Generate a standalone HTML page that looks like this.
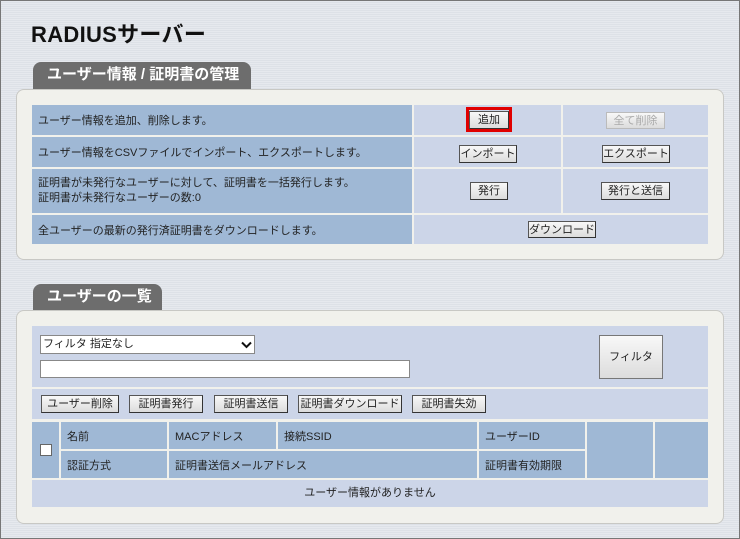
<!DOCTYPE html>
<html><head><meta charset="utf-8"><style>
*{margin:0;padding:0;box-sizing:border-box}
body{width:740px;height:539px;overflow:hidden;font-family:"Liberation Sans","Noto Sans CJK JP",sans-serif;font-size:11px;color:#222}
#w{position:absolute;left:0;top:0;width:740px;height:539px;border:1px solid #777;background:repeating-linear-gradient(#e6e9ee 0 1px,#dde1e7 1px 2px)}
.a{position:absolute}
h1{position:absolute;left:30px;top:16px;font-size:22px;font-weight:bold;color:#111;letter-spacing:0.3px}
.tab{position:absolute;background:#6d6d6d;border-radius:8px 8px 0 0;color:#fff;font-weight:bold;font-size:15px;padding-left:14px;line-height:26px}
.pan{position:absolute;left:15px;width:708px;background:#f1f1ec;border:1px solid #c8c8c4;border-radius:8px}
.dk{position:absolute;background:#9fb8d5;padding-left:6px;display:flex;align-items:center}
.lt{position:absolute;background:#ccd5e8}
.btn{position:absolute;background:linear-gradient(#f8f8f8,#dcdcdc);border:1px solid #555;border-right-color:#333;border-bottom-color:#333;font-size:11px;text-align:center;line-height:16px}
.wh{position:absolute;background:#fff;border:1px solid #888}
</style></head><body><div id="w">
<h1>RADIUSサーバー</h1>
<div class="tab" style="left:32px;top:61px;width:218px;height:28px">ユーザー情報 / 証明書の管理</div>
<div class="pan" style="top:88px;height:171px"></div>
<div class="dk" style="left:31px;top:104px;width:380px;height:30px">ユーザー情報を追加、削除します。</div>
<div class="lt" style="left:413px;top:104px;width:147px;height:30px"></div>
<div class="lt" style="left:562px;top:104px;width:145px;height:30px"></div>
<div class="dk" style="left:31px;top:136px;width:380px;height:30px">ユーザー情報をCSVファイルでインポート、エクスポートします。</div>
<div class="lt" style="left:413px;top:136px;width:147px;height:30px"></div>
<div class="lt" style="left:562px;top:136px;width:145px;height:30px"></div>
<div class="dk" style="left:31px;top:168px;width:380px;height:44px;line-height:15px">証明書が未発行なユーザーに対して、証明書を一括発行します。<br>証明書が未発行なユーザーの数:0</div>
<div class="lt" style="left:413px;top:168px;width:147px;height:44px"></div>
<div class="lt" style="left:562px;top:168px;width:145px;height:44px"></div>
<div class="dk" style="left:31px;top:214px;width:380px;height:29px">全ユーザーの最新の発行済証明書をダウンロードします。</div>
<div class="lt" style="left:413px;top:214px;width:294px;height:29px"></div>
<div class="a" style="left:465px;top:106px;width:46px;height:25px;border:3px solid #e00000"></div>
<div class="btn" style="left:468px;top:110px;width:40px;height:18px">追加</div>
<div class="btn" style="left:605px;top:111px;width:59px;height:17px;color:#aaa;border-color:#bbb">全て削除</div>
<div class="btn" style="left:458px;top:144px;width:58px;height:18px">インポート</div>
<div class="btn" style="left:601px;top:144px;width:68px;height:18px">エクスポート</div>
<div class="btn" style="left:469px;top:181px;width:38px;height:18px">発行</div>
<div class="btn" style="left:600px;top:181px;width:69px;height:18px">発行と送信</div>
<div class="btn" style="left:527px;top:220px;width:68px;height:17px">ダウンロード</div>

<div class="tab" style="left:32px;top:283px;width:129px;height:27px">ユーザーの一覧</div>
<div class="pan" style="top:309px;height:214px"></div>
<div class="lt" style="left:31px;top:325px;width:676px;height:61px"></div>
<div class="wh" style="left:39px;top:334px;width:215px;height:19px;padding-left:2px;line-height:17px">フィルタ 指定なし<svg class="a" style="left:200px;top:5px" width="11" height="8" viewBox="0 0 11 8"><path d="M1 1.5L5.5 6L10 1.5" fill="none" stroke="#111" stroke-width="2"/></svg></div>
<div class="wh" style="left:39px;top:359px;width:370px;height:18px"></div>
<div class="btn" style="left:598px;top:334px;width:64px;height:44px;line-height:42px;border-color:#777">フィルタ</div>
<div class="lt" style="left:31px;top:388px;width:676px;height:30px"></div>
<div class="btn" style="left:40px;top:394px;width:78px;height:18px">ユーザー削除</div>
<div class="btn" style="left:128px;top:394px;width:74px;height:18px">証明書発行</div>
<div class="btn" style="left:213px;top:394px;width:74px;height:18px">証明書送信</div>
<div class="btn" style="left:297px;top:394px;width:104px;height:18px">証明書ダウンロード</div>
<div class="btn" style="left:411px;top:394px;width:74px;height:18px">証明書失効</div>
<div class="dk" style="left:31px;top:421px;width:27px;height:56px"><div style="width:12px;height:12px;background:#fff;border:1px solid #666;margin-left:2px"></div></div>
<div class="dk" style="left:60px;top:421px;width:106px;height:27px">名前</div>
<div class="dk" style="left:168px;top:421px;width:107px;height:27px">MACアドレス</div>
<div class="dk" style="left:277px;top:421px;width:199px;height:27px">接続SSID</div>
<div class="dk" style="left:478px;top:421px;width:106px;height:27px">ユーザーID</div>
<div class="dk" style="left:586px;top:421px;width:66px;height:56px"></div>
<div class="dk" style="left:654px;top:421px;width:53px;height:56px"></div>
<div class="dk" style="left:60px;top:450px;width:106px;height:27px">認証方式</div>
<div class="dk" style="left:168px;top:450px;width:308px;height:27px">証明書送信メールアドレス</div>
<div class="dk" style="left:478px;top:450px;width:106px;height:27px">証明書有効期限</div>
<div class="lt" style="left:31px;top:479px;width:676px;height:27px;text-align:center;line-height:27px">ユーザー情報がありません</div>
</div></body></html>
